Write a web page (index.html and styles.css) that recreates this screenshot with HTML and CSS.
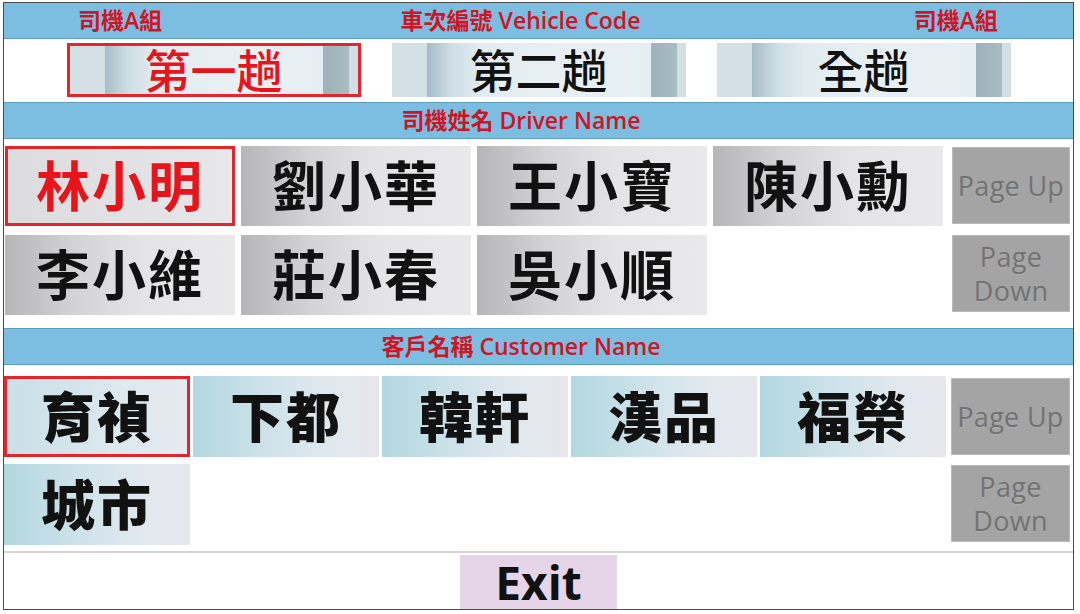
FILE: index.html
```html
<!DOCTYPE html>
<html lang="zh-Hant">
<head>
<meta charset="utf-8">
<title>車次編號</title>
<link rel="stylesheet" href="styles.css">
</head>
<body>
<div class="frame">
  <div class="bar bar-top">
    <span class="lbl">司機A組</span>
    <span class="mid">車次編號 Vehicle Code</span>
    <span class="lbl">司機A組</span>
  </div>
  <div class="trips">
    <div class="trip selected">第一趟</div>
    <div class="trip">第二趟</div>
    <div class="trip">全趟</div>
  </div>
  <div class="bar">司機姓名 Driver Name</div>
  <div class="panel drivers">
    <div class="names">
      <div class="name driver selected">林小明</div>
      <div class="name driver">劉小華</div>
      <div class="name driver">王小寶</div>
      <div class="name driver">陳小勳</div>
      <div class="name driver">李小維</div>
      <div class="name driver">莊小春</div>
      <div class="name driver">吳小順</div>
    </div>
    <div class="pager">
      <div class="page">Page Up</div>
      <div class="page">Page<br>Down</div>
    </div>
  </div>
  <div class="bar">客戶名稱 Customer Name</div>
  <div class="panel customers">
    <div class="names">
      <div class="name cust selected">育禎</div>
      <div class="name cust">下都</div>
      <div class="name cust">韓軒</div>
      <div class="name cust">漢品</div>
      <div class="name cust">福榮</div>
      <div class="name cust">城市</div>
    </div>
    <div class="pager">
      <div class="page">Page Up</div>
      <div class="page">Page<br>Down</div>
    </div>
  </div>
  <div class="sep"></div>
  <div class="footer">
    <div class="exit">Exit</div>
  </div>
</div>
</body>
</html>
```

FILE: styles.css
```css
* { box-sizing: border-box; }

body {
  margin: 0;
  background: #ffffff;
  font-family: "Open Sans", "Noto Sans CJK TC", sans-serif;
}

.frame {
  margin: 2px 0 0 3px;
  width: 1071px;
  height: 608px;
  border: 1px solid #4a4a4a;
  display: flex;
  flex-direction: column;
}

/* blue title bars */
.bar {
  flex: none;
  height: 37px;
  background: #7bbee1;
  border-top: 1px solid #5e9ebd;
  border-bottom: 1px solid #5e9ebd;
  color: #cf1424;
  font-size: 23px;
  font-weight: 600;
  line-height: 1;
  display: flex;
  align-items: center;
  justify-content: center;
  padding-right: 35px;
}

.bar-top {
  height: 36px;
  border-top: 0;
  justify-content: flex-start;
  padding: 0 75px 0 74px;
}

.bar-top .mid {
  flex: 1;
  text-align: center;
  padding-right: 35px;
}

/* trip selector */
.trips {
  flex: none;
  height: 63px;
  padding-top: 4px;
  display: flex;
  justify-content: center;
  gap: 31px;
}

.trip {
  width: 294px;
  height: 54px;
  background: linear-gradient(to right,
    #d3e1e7 0%, #d3e1e7 12%,
    #a6bcc5 12%, #cddde4 20%, #e2ecf0 30%, #e9f0f3 60%, #e5eef2 88%,
    #9db2ba 88%, #a9bcc4 97%, #d2dfe4 97%, #d2dfe4 100%);
  font-family: "Noto Sans CJK TC", sans-serif;
  font-size: 46px;
  font-weight: 500;
  color: #111111;
  line-height: 1;
  display: flex;
  align-items: center;
  justify-content: center;
  padding-bottom: 4px;
}

.trip.selected {
  border: 3px solid #e2262c;
  color: #e8141c;
}

/* name panels */
.panel {
  flex: none;
  display: flex;
}

.drivers {
  height: 189px;
  padding: 7px 2px 0 1px;
}

.customers {
  height: 186px;
  padding: 11px 2px 0 0;
}

.names {
  display: grid;
  align-content: start;
}

.drivers .names {
  grid-template-columns: repeat(4, 230px);
  grid-auto-rows: 80px;
  gap: 9px 6px;
}

.customers .names {
  grid-template-columns: repeat(5, 186px);
  grid-auto-rows: 81px;
  gap: 7px 3px;
}

.name {
  font-family: "Noto Sans CJK TC", sans-serif;
  font-size: 54px;
  font-weight: 700;
  color: #111111;
  letter-spacing: 2px;
  line-height: 1;
  display: flex;
  align-items: center;
  justify-content: center;
  padding-bottom: 4px;
}

.driver {
  background: linear-gradient(to right, #b6b6b8 0%, #d3d3d5 30%, #e4e4e6 60%, #e9e9eb 100%);
}

.driver.selected {
  background: linear-gradient(to right, #dcdcde 0%, #e7e7e9 100%);
  border: 3px solid #e2262c;
  color: #e8141c;
}

.cust {
  font-weight: 900;
  background: linear-gradient(to right, #b2d7e0 0%, #cbe1e9 35%, #dfe8ee 70%, #e8e6ed 100%);
}

.cust.selected {
  background: linear-gradient(to right, #c9dfe7 0%, #dde8ef 60%, #e4eaf0 100%);
  border: 3px solid #e2262c;
}

/* paging buttons */
.pager {
  display: flex;
  flex-direction: column;
}

.drivers .pager {
  width: 118px;
  margin-left: 9px;
  padding-top: 1px;
  gap: 11px;
}

.customers .pager {
  width: 119px;
  margin-left: 5px;
  padding-top: 2px;
  gap: 10px;
}

.page {
  height: 77px;
  background: #a4a4a4;
  border: 1px solid #bababa;
  color: #727272;
  font-size: 27px;
  line-height: 34px;
  letter-spacing: 0.3px;
  text-align: center;
  display: flex;
  align-items: center;
  justify-content: center;
  text-shadow: 0 1px 0 rgba(255, 255, 255, 0.12);
}

/* footer */
.sep {
  flex: none;
  height: 2px;
  background: #d4d4d4;
}

.footer {
  flex: 1;
  display: flex;
  justify-content: center;
  padding-top: 2px;
}

.exit {
  width: 157px;
  background: #e6d5e9;
  font-family: "Open Sans", sans-serif;
  font-size: 46px;
  font-weight: 700;
  color: #111111;
  line-height: 1;
  display: flex;
  align-items: center;
  justify-content: center;
}
```
